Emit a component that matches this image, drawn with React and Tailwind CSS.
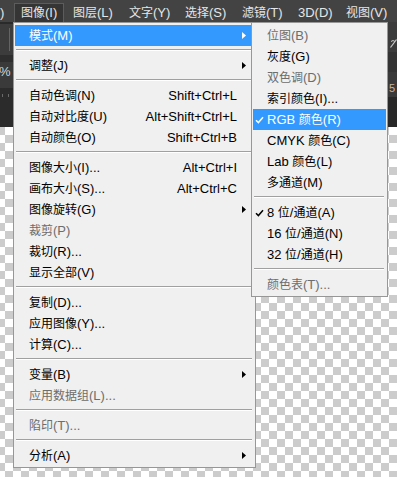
import React from 'react';

const MAIN = [
  { l: '模式(M)', arrow: true, active: true },
  'sep',
  { l: '调整(J)', arrow: true },
  'sep',
  { l: '自动色调(N)', k: 'Shift+Ctrl+L' },
  { l: '自动对比度(U)', k: 'Alt+Shift+Ctrl+L' },
  { l: '自动颜色(O)', k: 'Shift+Ctrl+B' },
  'sep',
  { l: '图像大小(I)...', k: 'Alt+Ctrl+I' },
  { l: '画布大小(S)...', k: 'Alt+Ctrl+C' },
  { l: '图像旋转(G)', arrow: true },
  { l: '裁剪(P)', off: true },
  { l: '裁切(R)...' },
  { l: '显示全部(V)' },
  'sep',
  { l: '复制(D)...' },
  { l: '应用图像(Y)...' },
  { l: '计算(C)...' },
  'sep',
  { l: '变量(B)', arrow: true },
  { l: '应用数据组(L)...', off: true },
  'sep',
  { l: '陷印(T)...', off: true },
  'sep',
  { l: '分析(A)', arrow: true },
];

const MODES = [
  { l: '位图(B)', off: true },
  { l: '灰度(G)' },
  { l: '双色调(D)', off: true },
  { l: '索引颜色(I)...' },
  { l: 'RGB 颜色(R)', check: true, active: true },
  { l: 'CMYK 颜色(C)' },
  { l: 'Lab 颜色(L)' },
  { l: '多通道(M)' },
  'sep',
  { l: '8 位/通道(A)', check: true },
  { l: '16 位/通道(N)' },
  { l: '32 位/通道(H)' },
  'sep',
  { l: '颜色表(T)...', off: true },
];

const TOP = [
  { l: '图层(L)', w: 'w-[56px]' },
  { l: '文字(Y)', w: 'w-[56px]' },
  { l: '选择(S)', w: 'w-[57px]' },
  { l: '滤镜(T)', w: 'w-[56px]' },
  { l: '3D(D)', w: 'w-[48px]' },
  { l: '视图(V)', w: 'w-[60px]' },
];

// CJK runs are set a size smaller than the Latin text, like the Windows menu font
function T({ s }) {
  return s.split(/([\u3400-\u9fff]+)/).map((p, i) =>
    i % 2 ? <span key={i} className="text-[12px]">{p}</span> : p
  );
}

function Sep() {
  return (
    <div className="h-[9px] pt-[3px] pl-[1px] pr-[2px]">
      <div className="h-px bg-[#a0a0a0]" />
      <div className="h-px bg-white" />
    </div>
  );
}

function Arrow({ white }) {
  return (
    <svg width="4" height="7" viewBox="0 0 4 7">
      <path d="M0 0 L4 3.5 L0 7 Z" fill={white ? '#ffffff' : '#000000'} />
    </svg>
  );
}

function Check({ white }) {
  return (
    <svg width="9" height="8" viewBox="0 0 9 8">
      <path d="M1 4.2 L3.4 6.6 L8 1.2" fill="none" stroke={white ? '#ffffff' : '#000000'} strokeWidth="1.5" />
    </svg>
  );
}

function Row({ item, sub }) {
  const color = item.active ? 'bg-[#3399ff] text-white' : item.off ? 'text-[#6d6d6d]' : 'text-black';
  return (
    <div className={`h-[21px] flex items-center pr-[8px] whitespace-nowrap ${color}`}>
      <div className="w-[14px] pl-[2px] flex items-center">
        {item.check && <Check white={item.active} />}
      </div>
      <div className="flex-1 leading-[21px]"><T s={item.l} /></div>
      {!sub && (
        <>
          {item.k && <div className="mr-[5px] leading-[21px]">{item.k}</div>}
          <div className="w-[4px] flex items-center">{item.arrow && <Arrow white={item.active} />}</div>
        </>
      )}
    </div>
  );
}

function Menu({ items, sub, className }) {
  return (
    <div className={`absolute top-[22px] bg-[#f0f0f0] border border-[#979797] pt-[2px] pb-[1px] px-[1px] ${className}`}>
      {items.map((it, i) => (it === 'sep' ? <Sep key={i} /> : <Row key={i} item={it} sub={sub} />))}
    </div>
  );
}

export default function App() {
  return (
    <div className="relative w-[397px] h-[477px] overflow-hidden flex flex-col font-['Liberation_Sans','Noto_Sans_CJK_SC',sans-serif] text-[13px]">
      {/* menu bar */}
      <div className="h-[22px] shrink-0 bg-[#434343] text-[#e6e6e6] flex pt-[3px] whitespace-nowrap">
        <div className="w-[14px] h-[19px] flex items-center pl-[0px]">)</div>
        <div className="w-[50px] h-[19px] flex items-center pl-[6px] bg-[#353535] border border-b-0 border-[#5c5c5c]">
          <T s="图像(I)" />
        </div>
        {TOP.map(t => (
          <div key={t.l} className={`${t.w} h-[19px] flex items-center pl-[9px] shrink-0`}>
            <T s={t.l} />
          </div>
        ))}
      </div>

      {/* option bar, tabs and rulers peeking out at the sides */}
      <div className="h-[105px] shrink-0 flex">
        <div className="w-[13px] flex flex-col text-[#d6d6d6]">
          <div className="h-[2px] bg-[#2a2a2a]" />
          <div className="h-[31px] bg-[#3c3c3c] flex py-[4px]">
            <div className="ml-[9px] w-px bg-[#646464]" />
          </div>
          <div className="h-[7px] bg-[#2e2e2e]" />
          <div className="h-[26px] bg-[#3a3a3a] pt-[3px] leading-[13px] -ml-px">%</div>
          <div className="flex-1 bg-[#2b2b2b] flex gap-[5px] pl-[2px] pt-[6px]">
            <div className="w-px h-[3px] bg-[#6a6a6a]" />
            <div className="w-px h-[3px] bg-[#6a6a6a]" />
          </div>
        </div>
        <div className="flex-1 bg-[#3c3c3c]" />
        <div className="w-[9px] flex flex-col">
          <div className="h-[30px] bg-[#3c3c3c] pt-[17px] pl-[2px]">
            <svg width="7" height="9" viewBox="0 0 7 9">
              <path d="M0.5 8.5 L6.5 0.5" stroke="#c8c8c8" strokeWidth="1.2" fill="none" />
              <path d="M1 2.5 Q3 0.5 5 2.5" stroke="#c8c8c8" strokeWidth="1" fill="none" />
            </svg>
          </div>
          <div className="h-[20px] bg-[#333333]" />
          <div className="h-[25px] bg-[#3a3a3a] pt-[11px] pl-[1px] leading-[10px] text-[11px] text-[#c9b39a]">5</div>
          <div className="flex-1 bg-[#282828]" />
        </div>
      </div>

      {/* transparent canvas */}
      <div className="flex-1 bg-[repeating-conic-gradient(#cccccc_0%_25%,#ffffff_0%_50%)] bg-[length:16px_16px] bg-[position:5px_0px]" />

      <Menu items={MAIN} className="left-[13px] w-[243px]" />
      <Menu items={MODES} sub className="left-[251px] w-[137px]" />
    </div>
  );
}
